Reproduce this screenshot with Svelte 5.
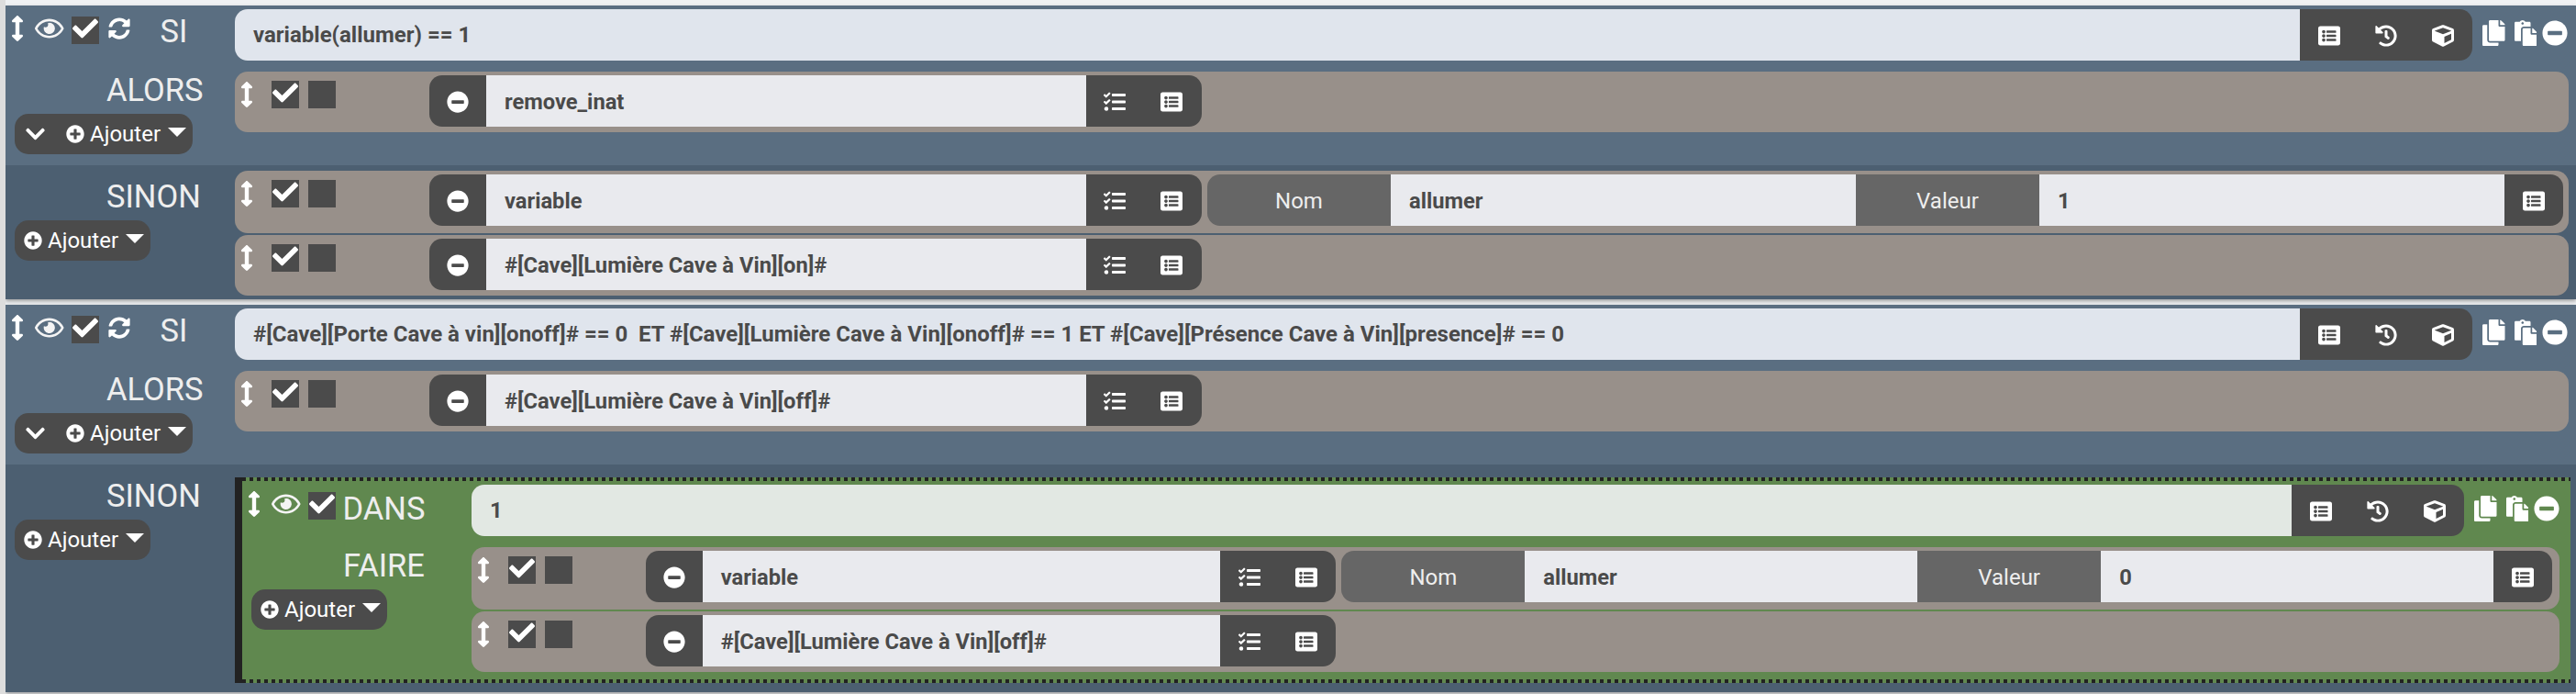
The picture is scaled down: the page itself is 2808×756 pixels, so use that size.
<script>
  const P = {
    drag: [256, 'M214.059 377.941H168V134.059h46.059c21.382 0 32.09-25.851 16.971-40.971L144.971 7.029c-9.373-9.373-24.568-9.373-33.941 0L24.971 93.088c-15.119 15.119-4.411 40.971 16.971 40.971H88v243.882H41.941c-21.382 0-32.09 25.851-16.971 40.971l86.059 86.059c9.373 9.373 24.568 9.373 33.941 0l86.059-86.059c15.12-15.119 4.412-40.971-16.97-40.971z'],
    eye: [576, 'M288 144a110.94 110.94 0 0 0-31.24 5 55.4 55.4 0 0 1 7.24 27 56 56 0 0 1-56 56 55.4 55.4 0 0 1-27-7.24A111.71 111.71 0 1 0 288 144zm284.52 97.4C518.29 135.59 410.93 64 288 64S57.68 135.64 3.48 241.41a32.35 32.35 0 0 0 0 29.19C57.71 376.41 165.07 448 288 448s230.32-71.64 284.52-177.41a32.35 32.35 0 0 0 0-29.19zM288 400c-98.65 0-189.09-55-237.93-144C98.91 167 189.34 112 288 112s189.09 55 237.93 144C477.1 345 386.66 400 288 400z'],
    check: [512, 'M173.898 439.404l-166.4-166.4c-9.997-9.997-9.997-26.206 0-36.204l36.203-36.204c9.997-9.998 26.207-9.998 36.204 0L192 312.69 432.095 72.596c9.997-9.997 26.207-9.997 36.204 0l36.203 36.204c9.997 9.997 9.997 26.206 0 36.204l-294.4 294.401c-9.998 9.997-26.207 9.997-36.204-.001z'],
    sync: [512, 'M370.72 133.28C339.458 104.008 298.888 87.962 255.848 88c-77.458.068-144.328 53.178-162.791 126.85-1.344 5.363-6.122 9.15-11.651 9.15H24.103c-7.498 0-13.194-6.807-11.807-14.176C33.933 94.924 134.813 8 256 8c66.448 0 126.791 26.136 171.315 68.685L463.03 40.97C478.149 25.851 504 36.559 504 57.941V192c0 13.255-10.745 24-24 24H345.941c-21.382 0-32.09-25.851-16.971-40.971l41.75-41.749zM32 296h134.059c21.382 0 32.09 25.851 16.971 40.971l-41.75 41.75c31.262 29.273 71.835 45.319 114.876 45.28 77.418-.07 144.315-53.144 162.787-126.849 1.344-5.363 6.122-9.15 11.651-9.15h57.304c7.498 0 13.194 6.807 11.807 14.176C478.067 417.076 377.187 504 256 504c-66.448 0-126.791-26.136-171.315-68.685L48.97 471.03C33.851 486.149 8 475.441 8 454.059V320c0-13.255 10.745-24 24-24z'],
    plus: [512, 'M256 8C119 8 8 119 8 256s111 248 248 248 248-111 248-248S393 8 256 8zm144 276c0 6.6-5.4 12-12 12h-92v92c0 6.6-5.4 12-12 12h-56c-6.6 0-12-5.4-12-12v-92h-92c-6.6 0-12-5.4-12-12v-56c0-6.6 5.4-12 12-12h92v-92c0-6.6 5.4-12 12-12h56c6.6 0 12 5.4 12 12v92h92c6.6 0 12 5.4 12 12v56z'],
    minus: [512, 'M256 8C119 8 8 119 8 256s111 248 248 248 248-111 248-248S393 8 256 8zM124 296c-6.6 0-12-5.4-12-12v-56c0-6.6 5.4-12 12-12h264c6.6 0 12 5.4 12 12v56c0 6.6-5.4 12-12 12H124z'],
    chevron: [448, 'M207.029 381.476L12.686 187.132c-9.373-9.373-9.373-24.569 0-33.941l22.667-22.667c9.357-9.357 24.522-9.375 33.901-.04L224 284.505l154.745-154.021c9.379-9.335 24.544-9.317 33.901.04l22.667 22.667c9.373 9.373 9.373 24.569 0 33.941L240.971 381.476c-9.373 9.372-24.569 9.372-33.942 0z'],
    list: [512, 'M464 480H48c-26.51 0-48-21.49-48-48V80c0-26.51 21.49-48 48-48h416c26.51 0 48 21.49 48 48v352c0 26.51-21.49 48-48 48zM128 120c-22.091 0-40 17.909-40 40s17.909 40 40 40 40-17.909 40-40-17.909-40-40-40zm0 96c-22.091 0-40 17.909-40 40s17.909 40 40 40 40-17.909 40-40-17.909-40-40-40zm0 96c-22.091 0-40 17.909-40 40s17.909 40 40 40 40-17.909 40-40-17.909-40-40-40zm288-136v-32c0-6.627-5.373-12-12-12H204c-6.627 0-12 5.373-12 12v32c0 6.627 5.373 12 12 12h200c6.627 0 12-5.373 12-12zm0 96v-32c0-6.627-5.373-12-12-12H204c-6.627 0-12 5.373-12 12v32c0 6.627 5.373 12 12 12h200c6.627 0 12-5.373 12-12zm0 96v-32c0-6.627-5.373-12-12-12H204c-6.627 0-12 5.373-12 12v32c0 6.627 5.373 12 12 12h200c6.627 0 12-5.373 12-12z'],
    history: [512, 'M504 255.531c.253 136.64-111.18 248.372-247.82 248.468-59.015.042-113.223-20.53-155.822-54.911-11.077-8.94-11.905-25.541-1.839-35.607l11.267-11.267c8.609-8.609 22.353-9.551 31.891-1.984C173.062 425.135 212.781 440 256 440c101.705 0 184-82.311 184-184 0-101.705-82.311-184-184-184-48.814 0-93.149 18.969-126.068 49.932l50.754 50.754c10.08 10.08 2.941 27.314-11.313 27.314H24c-8.837 0-16-7.163-16-16V38.627c0-14.254 17.234-21.393 27.314-11.314l49.372 49.372C129.209 34.136 189.552 8 256 8c136.81 0 247.747 110.78 248 247.531zm-180.912 78.784l9.823-12.63c8.138-10.463 6.253-25.542-4.21-33.679L288 256.349V152c0-13.255-10.745-24-24-24h-16c-13.255 0-24 10.745-24 24v135.651l65.409 50.874c10.463 8.137 25.541 6.253 33.679-4.21z'],
    cube: [512, 'M239.1 6.3l-208 78c-18.7 7-31.1 25-31.1 45v225.1c0 18.2 10.3 34.8 26.5 42.9l208 104c13.5 6.8 29.4 6.8 42.9 0l208-104c16.3-8.1 26.5-24.8 26.5-42.9V129.3c0-20-12.4-37.9-31.1-44.9l-208-78C262 2.2 250 2.2 239.1 6.3zM288 424.4V275.5l160-65v133.9l-160 80z M256 68.4l192 72v1.1l-192 78-192-78v-1.1l192-72z'],
    copy: [448, 'M320 448v40c0 13.255-10.745 24-24 24H24c-13.255 0-24-10.745-24-24V120c0-13.255 10.745-24 24-24h72v296c0 30.879 25.121 56 56 56h168zm0-344V0H152c-13.255 0-24 10.745-24 24v368c0 13.255 10.745 24 24 24h272c13.255 0 24-10.745 24-24V128H344c-13.2 0-24-10.8-24-24zm120.971-31.029L375.029 7.029A24 24 0 0 0 358.059 0H352v96h96v-6.059a24 24 0 0 0-7.029-16.97z'],
    paste: [448, 'M128 184c0-30.879 25.122-56 56-56h136V56c0-13.255-10.745-24-24-24h-80.61C204.306 12.89 183.637 0 160 0s-44.306 12.89-55.39 32H24C10.745 32 0 42.745 0 56v336c0 13.255 10.745 24 24 24h104V184zm32-144c13.255 0 24 10.745 24 24s-10.745 24-24 24-24-10.745-24-24 10.745-24 24-24zm184 248h104v200c0 13.255-10.745 24-24 24H184c-13.255 0-24-10.745-24-24V184c0-13.255 10.745-24 24-24h136v104c0 13.2 10.8 24 24 24zm104-38.059V256h-96v-96h6.059a24 24 0 0 1 16.97 7.029l65.941 65.941a24.002 24.002 0 0 1 7.03 16.971z'],
    tasks: [512, 'M139.61 35.5a12 12 0 0 0-17 0L58.93 98.81l-22.7-22.12a12 12 0 0 0-17 0L3.53 92.41a12 12 0 0 0 0 17l47.59 47.4a12.78 12.78 0 0 0 17.61 0l15.59-15.62L156.52 69a12.09 12.09 0 0 0 .09-17zm0 159.19a12 12 0 0 0-17 0l-63.68 63.72-22.7-22.1a12 12 0 0 0-17 0L3.53 252a12 12 0 0 0 0 17L51 316.5a12.77 12.77 0 0 0 17.6 0l15.7-15.69 72.2-72.22a12 12 0 0 0 .09-16.9zM64 368c-26.49 0-48.59 21.5-48.59 48S37.53 464 64 464a48 48 0 0 0 0-96zm432 16H208a16 16 0 0 0-16 16v32a16 16 0 0 0 16 16h288a16 16 0 0 0 16-16v-32a16 16 0 0 0-16-16zm0-320H208a16 16 0 0 0-16 16v32a16 16 0 0 0 16 16h288a16 16 0 0 0 16-16V80a16 16 0 0 0-16-16zm0 160H208a16 16 0 0 0-16 16v32a16 16 0 0 0 16 16h288a16 16 0 0 0 16-16v-32a16 16 0 0 0-16-16z']
  };
</script>

{#snippet ico(name, cls)}
  <svg class="ico {cls}" viewBox="0 0 {P[name][0]} 512" aria-hidden="true"><path d={P[name][1]} /></svg>
{/snippet}

{#snippet ajouter(chevron)}
  <div class="btn" class:has-chevron={chevron}>
    {#if chevron}{@render ico('chevron', 's24 chev')}{/if}
    {@render ico('plus', 's20')}
    <span class="btn-label">Ajouter</span>
    <span class="caret"></span>
  </div>
{/snippet}

{#snippet box(on)}
  <span class="box">{#if on}{@render ico('check', 's28 tick')}{/if}</span>
{/snippet}

{#snippet action(label, nom, valeur)}
  <div class="action" class:tall={nom}>
    <div class="action-ctl">
      {@render ico('drag', 's28 mv')}
      {@render box(true)}
      {@render box(false)}
    </div>
    <div class="group">
      <span class="cell">{@render ico('minus', 's24')}</span>
      <span class="field">{label}</span>
      <span class="cells-end">
        <span class="cell">{@render ico('tasks', 's24')}</span>
        <span class="cell">{@render ico('list', 's24')}</span>
      </span>
    </div>
    {#if nom}
      <div class="params">
        <span class="addon first">Nom</span>
        <span class="field">{nom}</span>
        <span class="addon">Valeur</span>
        <span class="field">{valeur}</span>
        <span class="cells-end single"><span class="cell">{@render ico('list', 's24')}</span></span>
      </div>
    {/if}
  </div>
{/snippet}

{#snippet condition(kw, value, sync)}
  <div class="cond">
    <div class="head">
      {@render ico('drag', 's28 mv')}
      {@render ico('eye', 's28 eye')}
      {@render box(true)}
      {#if sync}{@render ico('sync', 's24 sync')}{/if}
      <span class="kw" class:kw-si={sync}>{kw}</span>
    </div>
    <div class="expr">{value}</div>
    <div class="tools">
      <span class="cell">{@render ico('list', 's24')}</span>
      <span class="cell">{@render ico('history', 's24')}</span>
      <span class="cell">{@render ico('cube', 's24')}</span>
    </div>
    <div class="ops">
      {@render ico('copy', 's28')}
      {@render ico('paste', 's28 paste')}
      {@render ico('minus', 's28 del')}
    </div>
  </div>
{/snippet}

<div class="page">
  <section class="block">
    <div class="upper">
      {@render condition('SI', 'variable(allumer) == 1', true)}
      <div class="branch then">
        <div class="side">
          <div class="label">ALORS</div>
          {@render ajouter(true)}
        </div>
        <div class="body">{@render action('remove_inat')}</div>
      </div>
    </div>
    <div class="branch else">
      <div class="side">
        <div class="label">SINON</div>
        {@render ajouter(false)}
      </div>
      <div class="body">
        {@render action('variable', 'allumer', '1')}
        {@render action('#[Cave][Lumière Cave à Vin][on]#')}
      </div>
    </div>
  </section>

  <section class="block">
    <div class="upper">
      {@render condition('SI', '#[Cave][Porte Cave à vin][onoff]# == 0  ET #[Cave][Lumière Cave à Vin][onoff]# == 1 ET #[Cave][Présence Cave à Vin][presence]# == 0', true)}
      <div class="branch then">
        <div class="side">
          <div class="label">ALORS</div>
          {@render ajouter(true)}
        </div>
        <div class="body">{@render action('#[Cave][Lumière Cave à Vin][off]#')}</div>
      </div>
    </div>
    <div class="branch else last">
      <div class="side">
        <div class="label">SINON</div>
        {@render ajouter(false)}
      </div>
      <div class="body">
        <div class="loop">
          {@render condition('DANS', '1', false)}
          <div class="branch do">
            <div class="side">
              <div class="label">FAIRE</div>
              {@render ajouter(false)}
            </div>
            <div class="body">
              {@render action('variable', 'allumer', '0')}
              {@render action('#[Cave][Lumière Cave à Vin][off]#')}
            </div>
          </div>
        </div>
      </div>
    </div>
  </section>
</div>

<style>
  :global(body) { margin: 0; background: #eff1f3; }
  .page {
    border-left: 6px solid #ddd;
    padding-top: 6px;
    height: 750px;
    display: flex;
    flex-direction: column;
    gap: 6px;
    font-family: Roboto, sans-serif;
    overflow: hidden;
  }
  .block { box-shadow: 0 2px 4px rgba(0, 0, 0, .35); }
  .upper { background: #5a6e81; padding-top: 4px; }

  .ico { display: block; fill: #fff; flex: none; height: 24px; }
  .s20 { height: 20px; }
  .s24 { height: 24px; }
  .s28 { height: 28px; }

  /* condition row */
  .cond { display: flex; align-items: flex-start; padding-right: 9px; }
  .head { flex: 0 0 250px; display: flex; align-items: flex-start; padding: 7px 0 0 6px; box-sizing: border-box; height: 56px; }
  .eye { margin: 0 8px 0 12px; fill: #f4f4f4; }
  .box { flex: none; width: 30px; height: 30px; background: #4b4b4b; margin-top: 1px; display: flex; justify-content: center; }
  .tick { margin-top: -1px; }
  .sync { margin: 2px 0 0 10px; }
  .kw { color: #eee; font-size: 34.5px; line-height: 44px; margin: -3px 0 0 8px; }
  .kw-si { margin: -5px 0 0 33px; }
  .expr {
    flex: 1; min-width: 0; height: 56px; line-height: 56px; box-sizing: border-box;
    background: #e0e5ed; color: #4a4a4a; font-weight: 700; font-size: 24px;
    border-radius: 14px 0 0 14px; padding-left: 20px; white-space: pre;
  }
  .tools { flex: 0 0 188px; height: 56px; background: #4b4b4b; border-radius: 0 14px 14px 0; display: flex; }
  .cell { flex: 0 0 62px; display: flex; align-items: center; justify-content: center; height: 100%; padding: 1px 0 0 1px; box-sizing: border-box; }
  .ops { display: flex; align-items: flex-start; padding: 12px 0 0 11px; }
  .paste { margin-left: 10px; }
  .del { margin-left: 6px; }

  /* branches */
  .branch { display: flex; align-items: flex-start; }
  .side { flex: 0 0 250px; }
  .body { flex: 1; min-width: 0; }
  .label { color: #eee; font-size: 34.5px; line-height: 40px; padding-left: 110px; height: 46px; }
  .then { padding: 12px 8px 0 0; height: 114px; box-sizing: border-box; }
  .else { background: #4c5f71; padding: 6px 8px 4px 0; }
  .else > .side { margin-top: 8px; }
  .do { padding: 12px 12px 4px 0; }

  .btn {
    display: inline-flex; align-items: center; height: 44px; box-sizing: border-box;
    margin: 0 0 0 10px; padding: 0 7px 0 10px;
    background: #4b4b4b; border-radius: 15px; color: #fff; font-size: 24px;
  }
  .has-chevron { padding-left: 12px; }
  .chev { height: 24px; margin-right: 23px; }
  .btn-label { margin-left: 6px; line-height: 44px; }
  .caret { width: 0; height: 0; margin: -4px 0 0 8px; border-top: 10px solid #fff; border-left: 10px solid transparent; border-right: 10px solid transparent; }

  /* action rows */
  .action { display: flex; align-items: flex-start; background: #98908a; border-radius: 14px; height: 66px; padding: 4px 0 6px; box-sizing: border-box; }
  .action + .action { margin-top: 2px; }
  .action.tall { height: 68px; padding-bottom: 8px; }
  .action-ctl { flex: 0 0 8.333%; display: flex; align-items: flex-start; padding: 5px 0 0 6px; box-sizing: border-box; }
  .action-ctl .mv { margin: 2px 20px 0 0; }
  .action-ctl .box + .box { margin-left: 10px; }
  .group { flex: 0 0 calc(33.333% - 6px); display: flex; height: 56px; min-width: 0; }
  .group > .cell { background: #4b4b4b; border-radius: 14px 0 0 14px; }
  .field {
    flex: 1; min-width: 0; background: #e9eaee; color: #4a4a4a; font-weight: 700; font-size: 23.7px;
    line-height: 58px; padding-left: 20px; white-space: nowrap; overflow: hidden;
  }
  .cells-end { flex: 0 0 126px; display: flex; background: #4b4b4b; border-radius: 0 14px 14px 0; }
  .cells-end.single { flex-basis: 64px; }
  .params { flex: 1; min-width: 0; display: flex; height: 56px; margin: 0 6px; }
  .addon { flex: 0 0 200px; background: #666; color: #eee; font-size: 24px; text-align: center; line-height: 58px; }
  .addon.first { border-radius: 14px 0 0 14px; }

  /* nested loop */
  .last { padding-bottom: 10px; }
  .last > .body { padding-top: 8px; margin-right: -2px; }
  .loop {
    border-left: 8px solid #222;
    padding: 8px 0;
    background:
      repeating-linear-gradient(90deg, #222 0 4px, transparent 4px 8px) top / 100% 4px no-repeat,
      repeating-linear-gradient(90deg, #222 0 4px, transparent 4px 8px) bottom / 100% 4px no-repeat,
      #60884f;
  }
  .loop .cond { padding-right: 12px; }
  .loop .expr { background: #e2e8e3; }
  .loop .params { margin-right: 8px; }
</style>
